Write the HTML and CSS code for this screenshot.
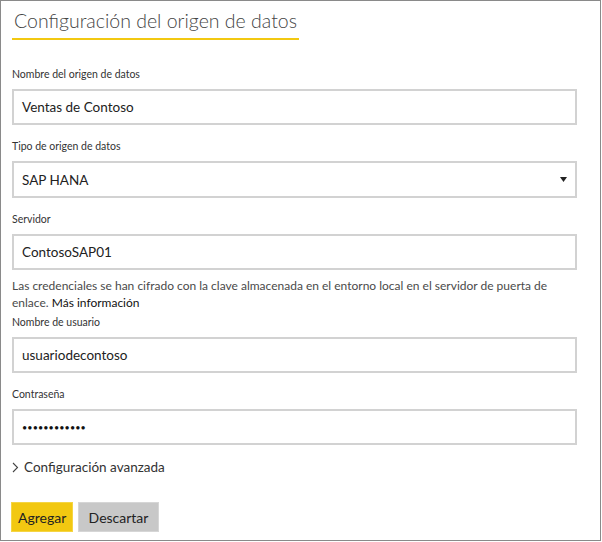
FILE: index.html
```html
<!DOCTYPE html>
<html lang="es">
<head>
<meta charset="utf-8">
<title>Configuración del origen de datos</title>
<link rel="stylesheet" href="styles.css">
</head>
<body>
<div class="frame">
  <h1 class="title">Configuración del origen de datos</h1>

  <div class="field">
    <div class="label">Nombre del origen de datos</div>
    <div class="input">Ventas de Contoso</div>
  </div>

  <div class="field">
    <div class="label">Tipo de origen de datos</div>
    <div class="input select">
      <span>SAP HANA</span>
      <svg class="caret" width="7" height="5" viewBox="0 0 7 5"><path d="M0 0H7L3.5 5Z" fill="#222"/></svg>
    </div>
  </div>

  <div class="field">
    <div class="label">Servidor</div>
    <div class="input">ContosoSAP01</div>
  </div>

  <p class="note"><span>Las credenciales se han cifrado con la clave almacenada en el entorno local en el servidor de puerta de</span> <span>enlace.</span> <b class="more">Más información</b></p>

  <div class="field">
    <div class="label">Nombre de usuario</div>
    <div class="input">usuariodecontoso</div>
  </div>

  <div class="field">
    <div class="label">Contraseña</div>
    <div class="input password">••••••••••••</div>
  </div>

  <div class="advanced">
    <svg class="chev" width="7" height="11" viewBox="0 0 7 11"><path d="M1 1L5.5 5.5L1 10" fill="none" stroke="#444" stroke-width="1.1"/></svg>
    <span>Configuración avanzada</span>
  </div>

  <div class="buttons">
    <button class="btn primary">Agregar</button>
    <button class="btn secondary">Descartar</button>
  </div>
</div>
</body>
</html>
```

FILE: styles.css
```css
* { box-sizing: border-box; }
html, body { margin: 0; padding: 0; background: #fff; }
body {
  font-family: Lato, "Open Sans", "Liberation Sans", sans-serif;
  color: #333;
}
.frame {
  width: 601px;
  height: 541px;
  border: 1px solid #8a8a8a;
  padding: 0 23px 0 11px;
  display: flex;
  flex-direction: column;
}
.title {
  align-self: flex-start;
  margin: 0;
  padding: 6px 2px 3px 2px;
  font-size: 19.5px;
  line-height: 28px;
  font-weight: 300;
  color: #444;
  border-bottom: 2px solid #f2c811;
  margin-bottom: 26px;
}
.field { display: flex; flex-direction: column; margin-bottom: 13px; }
.label {
  font-size: 10.5px;
  line-height: 16px;
  color: #333;
  margin-bottom: 7px;
}
.input {
  height: 36px;
  border: 2px solid #d2d2d2;
  padding: 0 8px;
  display: flex;
  align-items: center;
  font-size: 13.5px;
  color: #222;
}
.select { height: 37px; justify-content: space-between; padding-right: 8px; }
.password { font-size: 9px; letter-spacing: 0.1px; color: #111; }
.note {
  margin: -6px 0 3px 0;
  font-size: 12px;
  line-height: 17px;
  color: #4a4a4a;
}
.more { color: #111; font-weight: 400; }
.advanced {
  display: flex;
  align-items: center;
  gap: 5px;
  font-size: 13.5px;
  line-height: 18px;
  color: #333;
}
.buttons { display: flex; gap: 5px; margin-top: 26px; margin-left: -1px; }
.btn {
  height: 30px;
  border: 1px solid transparent;
  font-family: inherit;
  font-size: 14px;
  color: #222;
  padding: 0 6px;
}
.primary { background: #f2c811; border-color: #f5d544; width: 62px; }
.secondary { background: #c8c8c8; border-color: #d6d6d6; width: 81px; }
```
